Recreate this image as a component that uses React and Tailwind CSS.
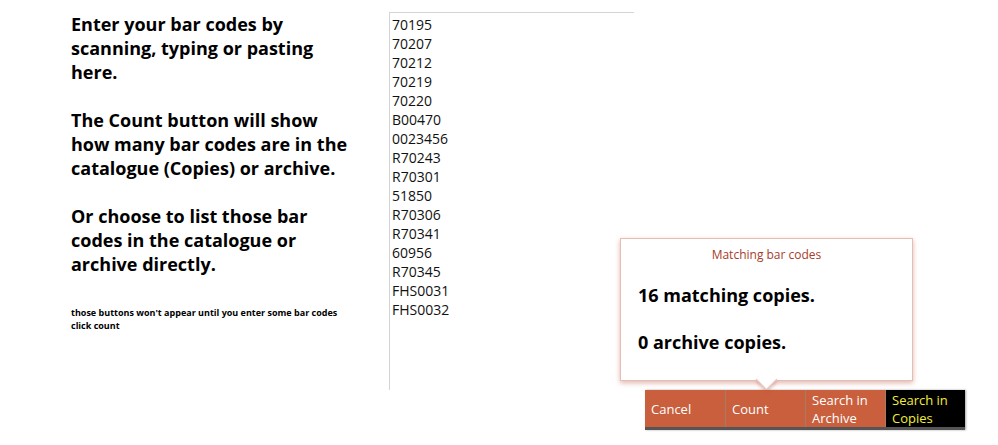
import React from 'react';

const CODES = [
  '70195', '70207', '70212', '70219', '70220', 'B00470', '0023456', 'R70243',
  'R70301', '51850', 'R70306', 'R70341', '60956', 'R70345', 'FHS0031', 'FHS0032',
];

const BUTTONS = [
  { label: 'Cancel', dark: false },
  { label: 'Count', dark: false },
  { label: 'Search in Archive', dark: false },
  { label: 'Search in Copies', dark: true },
];

export default function App() {
  return (
    <div
      className="relative flex h-[445px] w-[998px] bg-white pl-[71px] text-black"
      style={{ fontFamily: '"Open Sans", "Noto Sans", sans-serif' }}
    >
      <div className="w-[280px] pt-[12px]">
        <div className="space-y-[24px] text-[18px] font-bold leading-[24px]">
          <p>Enter your bar codes by scanning, typing or pasting here.</p>
          <p>The Count button will show how many bar codes are in the catalogue (Copies) or archive.</p>
          <p>Or choose to list those bar codes in the catalogue or archive directly.</p>
        </div>
        <p className="mt-[30px] text-[9px] font-bold leading-[13px]">
          those buttons won't appear until you enter some bar codes click count
        </p>
      </div>

      <textarea
        readOnly
        defaultValue={CODES.join('\n')}
        className="ml-[38px] mt-[12px] h-[378px] w-[245px] resize-none border-l border-t border-[#d4d4d4] px-[2px] pt-[2px] text-[14px] leading-[19px] text-[#111] outline-none"
        style={{ fontFamily: '"Open Sans", "Noto Sans", sans-serif' }}
      />

      <div className="flex flex-col pt-[390px]">
        <div className="ml-[11px] flex h-[40px] border-b-[3px] border-[#555] shadow-[1px_0_2px_rgba(0,0,0,0.35)]">
          {BUTTONS.map((b, i) => (
            <div
              key={b.label}
              className={`flex w-[80px] items-center px-[6px] text-[13px] leading-[18px] ${
                b.dark ? 'bg-black text-[#f2ee3a]' : 'bg-[#c95f3d] text-white'
              } ${i > 0 ? 'border-l border-[#a87a66]' : ''}`}
            >
              {b.label}
            </div>
          ))}
        </div>
      </div>

      {/* popover */}
      <div className="absolute left-[620px] top-[238px]">
        <div className="relative h-[143px] w-[293px] border border-[#e6bdb3] bg-white shadow-[0_2px_5px_rgba(190,90,70,0.45)]">
          <div className="pt-[7px] text-center text-[12px] leading-[18px] text-[#a63d2b]">Matching bar codes</div>
          <div className="mt-[19px] pl-[17px] text-[18px] font-bold leading-[24px]">16 matching copies.</div>
          <div className="mt-[23px] pl-[17px] text-[18px] font-bold leading-[24px]">0 archive copies.</div>
          <div className="absolute left-[138px] top-[133px] h-[15px] w-[15px] rotate-45 border-b border-r border-[#e6bdb3] bg-white shadow-[2px_2px_3px_rgba(190,90,70,0.35)]" />
        </div>
      </div>
    </div>
  );
}
